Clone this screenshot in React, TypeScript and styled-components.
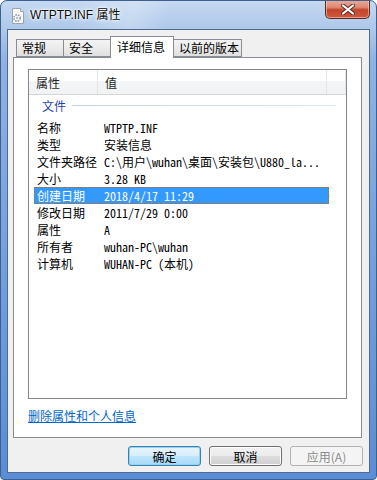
import React from 'react';
import styled, {createGlobalStyle} from 'styled-components';

const GlobalStyle = createGlobalStyle`
  html, body {
    margin: 0;
    padding: 0;
    background: #ffffff;
  }
  body {
    font-family: "Noto Sans CJK SC", "Liberation Sans", sans-serif;
    font-size: 12px;
  }
`;

const Window = styled.div`
  width: 377px;
  height: 480px;
  box-sizing: border-box;
  display: flex;
  flex-direction: column;
  border: 1px solid #3f5f8f;
  border-radius: 7px 7px 4px 4px;
  overflow: hidden;
  background:
    linear-gradient(100deg, rgba(255, 255, 255, 0) 20%, rgba(255, 255, 255, 0.25) 35%, rgba(255, 255, 255, 0) 45%) 0 0 / 100% 30px no-repeat,
    linear-gradient(180deg, #c4d9f1 0px, #adc8ea 28px, #8fb2e2 60px, #6e9cdc 300px, #5b8dd6 100%);
`;

const TitleBar = styled.div`
  height: 28px;
  display: flex;
  align-items: flex-start;
  position: relative;
  flex-shrink: 0;
`;

const TitleIcon = styled.div`
  margin: 7px 0 0 9px;
  width: 16px;
  height: 16px;
`;

const TitleText = styled.div`
  margin: 6px 0 0 4px;
  font-family: "Liberation Sans", "Noto Sans CJK SC", sans-serif;
  font-size: 12px;
  line-height: 16px;
  color: #0b0b0b;
  text-shadow: 0 0 6px #ffffff, 0 0 3px #ffffff, 0 0 2px #ffffff;
`;

const CloseButton = styled.div`
  position: absolute;
  top: -1px;
  right: 6px;
  width: 45px;
  height: 19px;
  box-sizing: border-box;
  border: 1px solid #5e2a22;
  border-top: none;
  border-radius: 0 0 5px 5px;
  background: linear-gradient(180deg, #e9a99a 0%, #dc8a74 40%, #c3432c 55%, #cf5a3d 100%);
  box-shadow: inset 0 0 0 1px rgba(255, 210, 200, 0.55);
  display: flex;
  align-items: center;
  justify-content: center;
`;

const Client = styled.div`
  flex: 1;
  margin: 0 6px 6px 6px;
  border: 1px solid #4e6a91;
  background: #f0f0f0;
  display: flex;
  flex-direction: column;
`;

const TabStrip = styled.div`
  display: flex;
  align-items: flex-end;
  padding: 6px 0 0 8px;
  height: 21px;
  position: relative;
  z-index: 1;
`;

const Tab = styled.div<{ $active?: boolean; $width: number }>`
  box-sizing: border-box;
  flex: none;
  width: ${p => p.$width}px;
  height: ${p => (p.$active ? '22px' : '18px')};
  margin-bottom: ${p => (p.$active ? '-1px' : '0')};
  padding: ${p => (p.$active ? '2px 0 0 6px' : '0 0 0 5px')};
  border: 1px solid #898c95;
  border-bottom: ${p => (p.$active ? 'none' : '1px solid #898c95')};
  background: ${p => (p.$active ? '#ffffff' : 'linear-gradient(180deg, #f3f3f3 0%, #ebebeb 50%, #dfdfdf 100%)')};
  display: flex;
  align-items: ${p => (p.$active ? 'flex-start' : 'center')};
  font-size: 12px;
  line-height: 16px;
  color: #000;
  position: relative;
  z-index: ${p => (p.$active ? 2 : 1)};
  & + & {
    margin-left: -1px;
  }
`;

const TabPanel = styled.div`
  margin: 0 7px 0 5px;
  height: 381px;
  box-sizing: border-box;
  border: 1px solid #898c95;
  background: #ffffff;
  padding: 11px 14px 0 14px;
  display: flex;
  flex-direction: column;
`;

const ListBox = styled.div`
  height: 330px;
  box-sizing: border-box;
  border: 1px solid #828790;
  background: #ffffff;
  display: flex;
  flex-direction: column;
`;

const HeaderRow = styled.div`
  height: 24px;
  display: flex;
  background: linear-gradient(180deg, #ffffff 0%, #ffffff 45%, #f4f5f7 46%, #f1f2f4 100%);
  border-bottom: 1px solid #d5d5d5;
`;

const HeaderCell = styled.div<{ $width?: number }>`
  width: ${p => (p.$width ? `${p.$width}px` : 'auto')};
  flex: ${p => (p.$width ? 'none' : 1)};
  box-sizing: border-box;
  padding-left: 7px;
  display: flex;
  align-items: center;
  font-size: 12px;
  color: #1e1e1e;
  border-right: 1px solid #e3e5e8;
`;

const GroupHeader = styled.div`
  display: flex;
  align-items: center;
  height: 17px;
  margin: 2px 10px 5px 13px;
  color: #1e46b4;
  font-size: 12px;
  &::after {
    content: '';
    flex: 1;
    height: 1px;
    margin-left: 6px;
    background: linear-gradient(90deg, #c6d3e7 0%, #dfe7f3 100%);
  }
`;

const Row = styled.div<{ $selected?: boolean }>`
  display: flex;
  height: 17px;
  margin: 0 17px 0 5px;
  box-sizing: border-box;
  align-items: center;
  background: ${p => (p.$selected ? '#3399ff' : 'transparent')};
  border: 1px dotted ${p => (p.$selected ? '#cc6600' : 'transparent')};
  color: ${p => (p.$selected ? '#ffffff' : '#000000')};
`;

const NameCell = styled.div`
  width: 67px;
  padding-left: 2px;
  font-size: 12px;
  line-height: 15px;
  white-space: nowrap;
`;

const ValueCell = styled.div`
  font-family: "Noto Sans Mono CJK SC", "Liberation Mono", "Noto Sans CJK SC", monospace;
  font-size: 12px;
  line-height: 15px;
  white-space: nowrap;
`;

const LinkRow = styled.div`
  padding: 8px 0 0 0;
`;

const Link = styled.a`
  color: #0066cc;
  text-decoration: underline;
  font-size: 12px;
  line-height: 16px;
  cursor: pointer;
`;

const ButtonBar = styled.div`
  display: flex;
  justify-content: flex-end;
  gap: 8px;
  padding: 8px 6px 0 0;
`;

const Button = styled.div<{ $kind?: 'default' | 'normal' | 'disabled' }>`
  width: 73px;
  height: 20px;
  box-sizing: border-box;
  border-radius: 3px;
  display: flex;
  align-items: center;
  justify-content: center;
  font-size: 12px;
  border: 1px solid ${p => (p.$kind === 'default' ? '#3c7fb1' : p.$kind === 'disabled' ? '#adb2b5' : '#707070')};
  color: ${p => (p.$kind === 'disabled' ? '#8b8b8b' : '#000')};
  background: ${p =>
    p.$kind === 'default'
      ? 'linear-gradient(180deg, #e5f4fc 0%, #d8eefb 50%, #bee6fd 51%, #a7d9f5 100%)'
      : p.$kind === 'disabled'
      ? '#f4f4f4'
      : 'linear-gradient(180deg, #f2f2f2 0%, #ebebeb 50%, #dddddd 51%, #cfcfcf 100%)'};
  box-shadow: ${p => (p.$kind === 'default' ? 'inset 0 0 0 1px #8fd3f5' : p.$kind === 'disabled' ? 'none' : 'inset 0 0 0 1px #fcfcfc')};
`;

const rows: { name: string; value: string; selected?: boolean }[] = [
  {name: '名称', value: 'WTPTP.INF'},
  {name: '类型', value: '安装信息'},
  {name: '文件夹路径', value: 'C:\\用户\\wuhan\\桌面\\安装包\\U880_la...'},
  {name: '大小', value: '3.28 KB'},
  {name: '创建日期', value: '2018/4/17 11:29', selected: true},
  {name: '修改日期', value: '2011/7/29 0:00'},
  {name: '属性', value: 'A'},
  {name: '所有者', value: 'wuhan-PC\\wuhan'},
  {name: '计算机', value: 'WUHAN-PC (本机)'},
];

const tabs = [
  {label: '常规', width: 48},
  {label: '安全', width: 48},
  {label: '详细信息', width: 64, active: true},
  {label: '以前的版本', width: 69},
];

const FileIcon = () => (
  <svg width="16" height="16" viewBox="0 0 16 16">
    <path d="M2.5 0.5h8l3 3v12h-11z" fill="#fbfbfb" stroke="#9aa4b0" />
    <path d="M10.5 0.5v3h3" fill="#e6e9ee" stroke="#9aa4b0" />
    <circle cx="7" cy="10" r="3.2" fill="none" stroke="#8c9aa8" strokeWidth="1.6" strokeDasharray="1.6 1" />
    <circle cx="7" cy="10" r="1.2" fill="#b5c0cc" />
  </svg>
);

const CloseGlyph = () => (
  <svg width="14" height="11" viewBox="0 0 14 11">
    <path d="M2 1.5 L12 9.5 M12 1.5 L2 9.5" stroke="#5b2b25" strokeWidth="4" strokeLinecap="round" />
    <path d="M2 1.5 L12 9.5 M12 1.5 L2 9.5" stroke="#ffffff" strokeWidth="2.2" strokeLinecap="round" />
  </svg>
);

const App = () => {
  return (
    <>
      <GlobalStyle />
      <Window>
        <TitleBar>
          <TitleIcon>
            <FileIcon />
          </TitleIcon>
          <TitleText>WTPTP.INF 属性</TitleText>
          <CloseButton>
            <CloseGlyph />
          </CloseButton>
        </TitleBar>
        <Client>
          <TabStrip>
            {tabs.map(t => (
              <Tab key={t.label} $width={t.width} $active={t.active}>
                {t.label}
              </Tab>
            ))}
          </TabStrip>
          <TabPanel>
            <ListBox>
              <HeaderRow>
                <HeaderCell $width={69}>属性</HeaderCell>
                <HeaderCell $width={229}>值</HeaderCell>
                <HeaderCell />
              </HeaderRow>
              <GroupHeader>文件</GroupHeader>
              {rows.map(r => (
                <Row key={r.name} $selected={r.selected}>
                  <NameCell>{r.name}</NameCell>
                  <ValueCell>{r.value}</ValueCell>
                </Row>
              ))}
            </ListBox>
            <LinkRow>
              <Link>删除属性和个人信息</Link>
            </LinkRow>
          </TabPanel>
          <ButtonBar>
            <Button $kind="default">确定</Button>
            <Button>取消</Button>
            <Button $kind="disabled">应用(A)</Button>
          </ButtonBar>
        </Client>
      </Window>
    </>
  );
};

export default App;
